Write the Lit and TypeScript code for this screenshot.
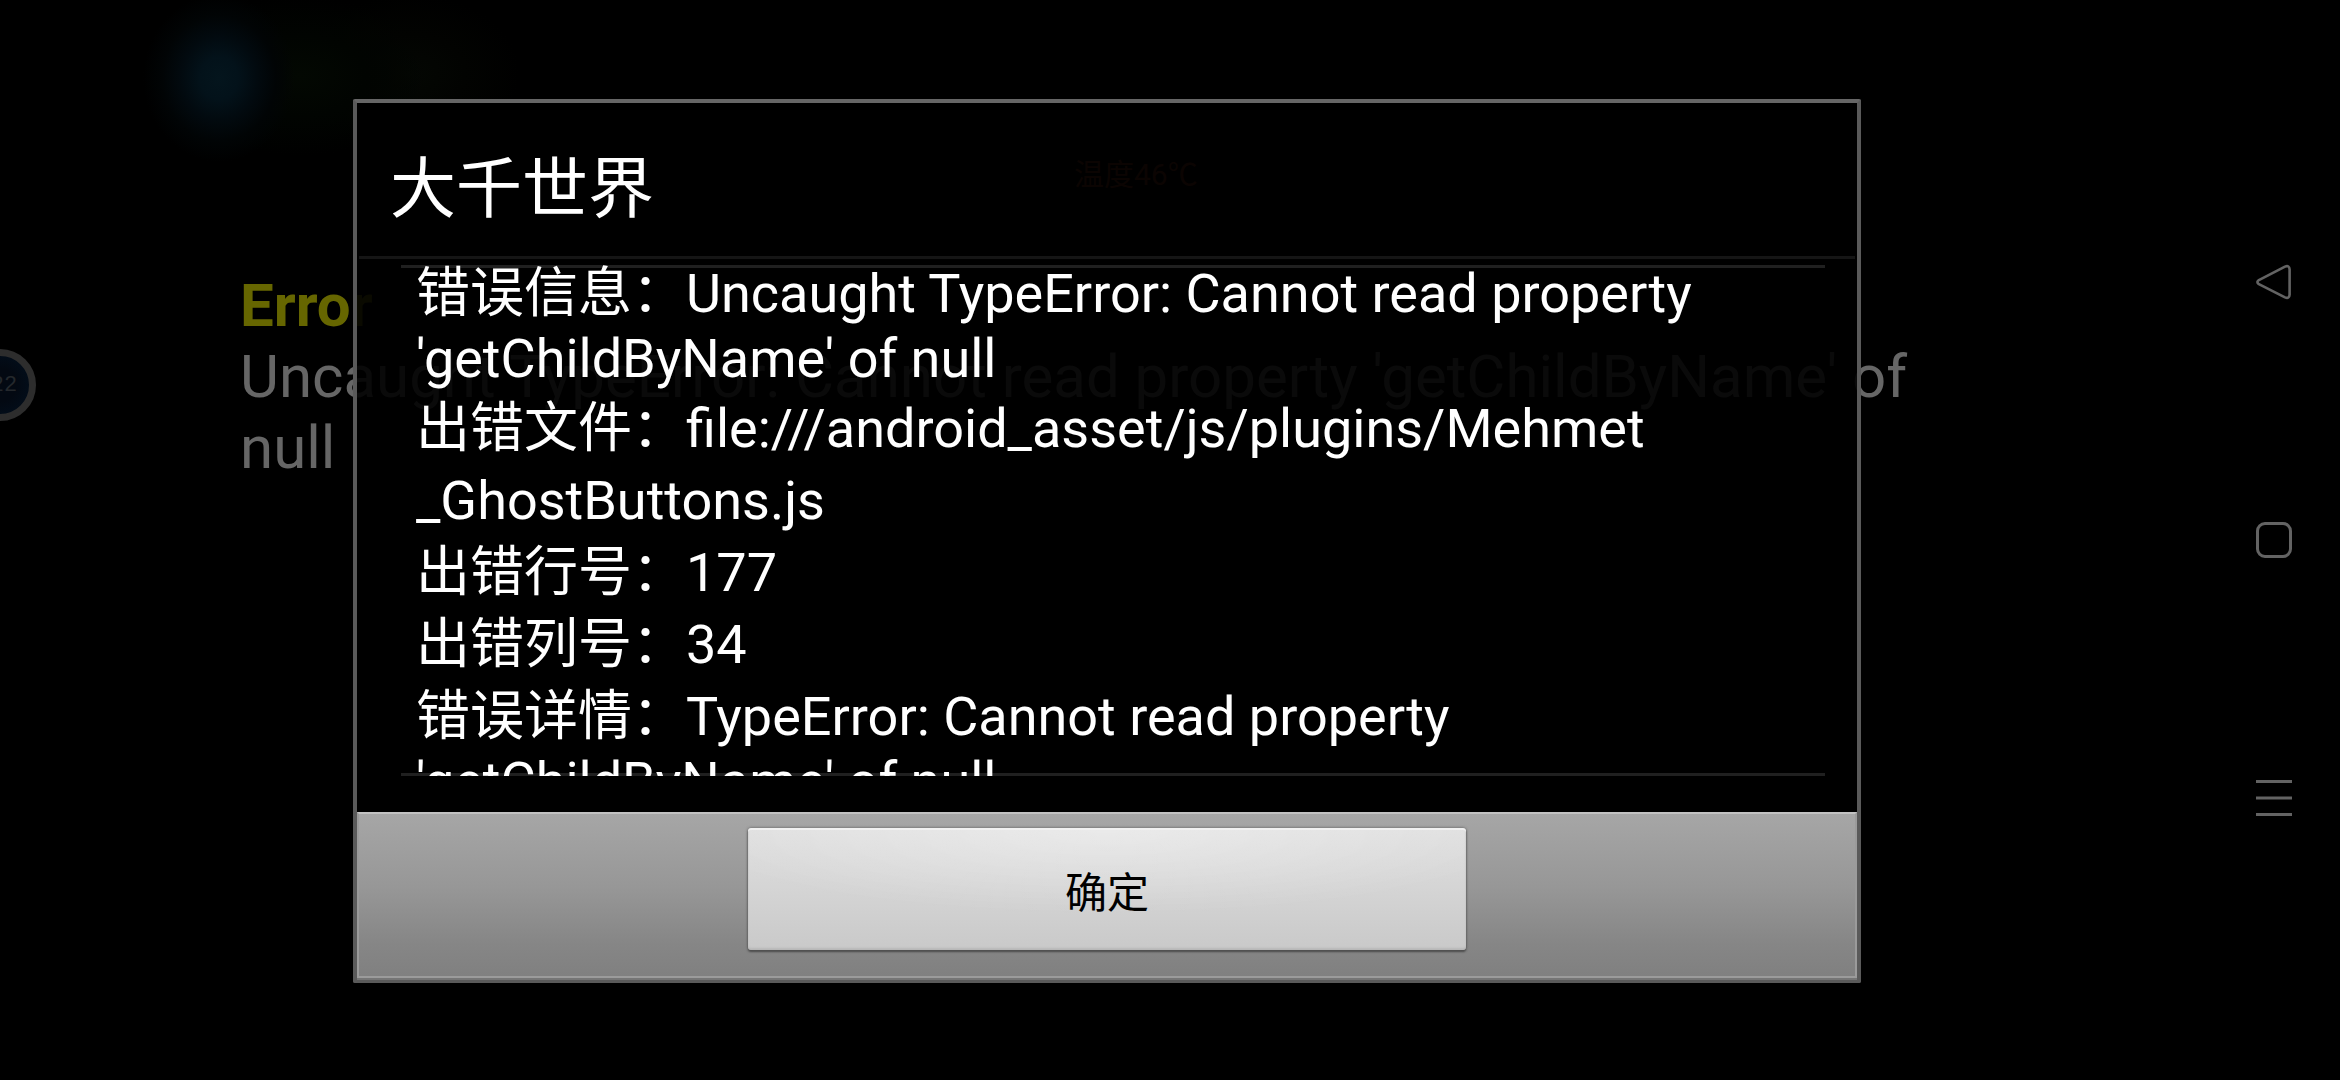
import { LitElement, html, css, svg } from "lit";
import { customElement } from "lit/decorators.js";

interface Line {
  label?: string;
  text: string;
  tight?: boolean;
}

const LINES: Line[] = [
  { label: "错误信息：", text: "Uncaught TypeError: Cannot read property" },
  { text: "'getChildByName' of null", tight: true },
  { label: "出错文件：", text: "file:///android_asset/js/plugins/Mehmet" },
  { text: "_GhostButtons.js" },
  { label: "出错行号：", text: "177" },
  { label: "出错列号：", text: "34" },
  { label: "错误详情：", text: "TypeError: Cannot read property" },
  { text: "'getChildByName' of null", tight: true },
];

@customElement("game-screen")
export class GameScreen extends LitElement {
  static styles = css`
    :host {
      display: block;
      position: relative;
      flex: 1;
      min-width: 0;
      overflow: hidden;
      background:
        radial-gradient(ellipse 76px 84px at 219px 78px, #04151d 0%, #03121a 25%, #020a0f 50%, #010405 75%, transparent 100%),
        radial-gradient(ellipse 130px 80px at 300px 76px, #030802 0%, #010401 50%, transparent 100%),
        radial-gradient(ellipse 110px 80px at 410px 74px, #040703 0%, #020301 50%, transparent 100%),
        #000;
    }
    .report {
      padding: 270px 240px 0;
      font-size: 60px;
      line-height: 71px;
      color: #666;
    }
    .report h1 {
      margin: 0;
      font: inherit;
      font-weight: 700;
      color: #660;
    }
    .report p {
      margin: 0;
    }
    .gauge {
      position: absolute;
      top: 155px;
      left: 1074px;
      font-size: 30px;
      line-height: 40px;
      color: #6e2e1c;
    }
    .ball {
      position: absolute;
      top: 349px;
      left: -36px;
      box-sizing: border-box;
      width: 72px;
      height: 72px;
      padding-left: 8px;
      border: 7px solid #2d2d2d;
      border-radius: 50%;
      background: radial-gradient(circle, #030912 40%, #02101f 100%);
      display: flex;
      align-items: center;
      justify-content: center;
      font-family: "Liberation Mono", monospace;
      font-size: 22px;
      color: #24282c;
    }
  `;

  render() {
    return html`
      <div class="report">
        <h1>Error</h1>
        <p>Uncaught TypeError: Cannot read property 'getChildByName' of null</p>
      </div>
      <div class="gauge">温度46℃</div>
      <div class="ball">22</div>
    `;
  }
}

@customElement("nav-bar")
export class NavBar extends LitElement {
  static styles = css`
    :host {
      display: flex;
      flex-direction: column;
      justify-content: center;
      align-items: center;
      gap: 194px;
      width: 132px;
      background: #000;
    }
    button {
      display: flex;
      justify-content: center;
      align-items: center;
      width: 64px;
      height: 64px;
      padding: 0;
      border: 0;
      background: none;
      color: #636363;
    }
    svg {
      width: 40px;
      height: 40px;
      fill: none;
      stroke: currentColor;
      stroke-width: 3;
      stroke-linejoin: round;
      stroke-linecap: butt;
    }
  `;

  private key(label: string, shape: unknown) {
    return html`<button aria-label=${label}>
      <svg viewBox="0 0 40 40">${shape}</svg>
    </button>`;
  }

  render() {
    return html`
      ${this.key(
        "返回",
        svg`<path stroke-width="2.6" d="M4.4 18.4 L31 4.6 Q35.4 3 35.6 7.4 V32.6 Q35.4 37 31 35.4 L4.4 21.8 Q2.4 20 4.4 18.4 Z" />`,
      )}
      ${this.key("主页", svg`<rect x="3.5" y="3.5" width="33" height="33" rx="7.5" />`)}
      ${this.key("菜单", svg`<path d="M2 3.5 H38 M2 20 H38 M2 36.5 H38" />`)}
    `;
  }
}

@customElement("error-dialog")
export class ErrorDialog extends LitElement {
  static styles = css`
    :host {
      display: flex;
      flex-direction: column;
      box-sizing: border-box;
      border: 4px solid #5a5a5a;
      border-top-color: #666;
      border-radius: 2px;
      background: rgba(0, 0, 0, 0.9);
      color: #fff;
    }
    h2 {
      margin: 0 2px;
      padding: 47px 31px 26px;
      border-bottom: 3px solid #151515;
      font-size: 66px;
      line-height: 80px;
      font-weight: 400;
    }
    .scroll {
      flex: 1;
      min-height: 0;
      overflow: hidden;
      margin: 6px 32px 36px 44px;
      padding: 0 15px;
      box-shadow: inset 0 3px #202020, inset 0 -3px #202020;
      font-size: 54px;
    }
    .line {
      line-height: 72px;
      white-space: nowrap;
    }
    .line:first-child {
      margin-top: -7px;
    }
    .tight {
      line-height: 58px;
      padding-bottom: 5px;
    }
    .footer {
      display: flex;
      justify-content: center;
      align-items: flex-start;
      padding: 14px 0 26px;
      border: 2px solid #9b9b9b;
      border-top-color: #c2c2c2;
      background: linear-gradient(#a6a6a6, #979797 45%, #868686 80%, #808080);
      box-shadow: 0 2px #757575;
      margin-bottom: 1px;
    }
    .ok {
      width: 48%;
      height: 122px;
      padding: 0;
      border: 0;
      border-radius: 3px;
      background:
        radial-gradient(ellipse 60% 70% at 50% 0, rgba(255, 255, 255, 0.35), transparent),
        linear-gradient(#e0e0e0, #c9c9c9);
      box-shadow:
        inset 0 2px #f0f0f0,
        inset 0 -2px 2px #b8b8b8,
        0 0 3px #555,
        0 2px 2px #4c4c4c;
      font: inherit;
      font-size: 42px;
      color: #000;
    }
  `;

  render() {
    return html`
      <h2>大千世界</h2>
      <div class="scroll">
        ${LINES.map(
          (l) => html`<div class="line ${l.tight ? "tight" : ""}">${l.label ?? ""}${l.text}</div>`,
        )}
      </div>
      <div class="footer"><button class="ok">确定</button></div>
    `;
  }
}

@customElement("app-root")
export class AppRoot extends LitElement {
  static styles = css`
    :host {
      display: flex;
      position: relative;
      height: 100vh;
      overflow: hidden;
      background: #000;
      font-family: Roboto, "Noto Sans CJK SC", sans-serif;
    }
    .overlay {
      position: absolute;
      inset: 0;
      display: flex;
      padding: 99px 479px 97px 353px;
      pointer-events: none;
    }
    error-dialog {
      flex: 1;
      pointer-events: auto;
    }
  `;

  render() {
    return html`
      <game-screen></game-screen>
      <nav-bar></nav-bar>
      <div class="overlay"><error-dialog role="alertdialog"></error-dialog></div>
    `;
  }
}
